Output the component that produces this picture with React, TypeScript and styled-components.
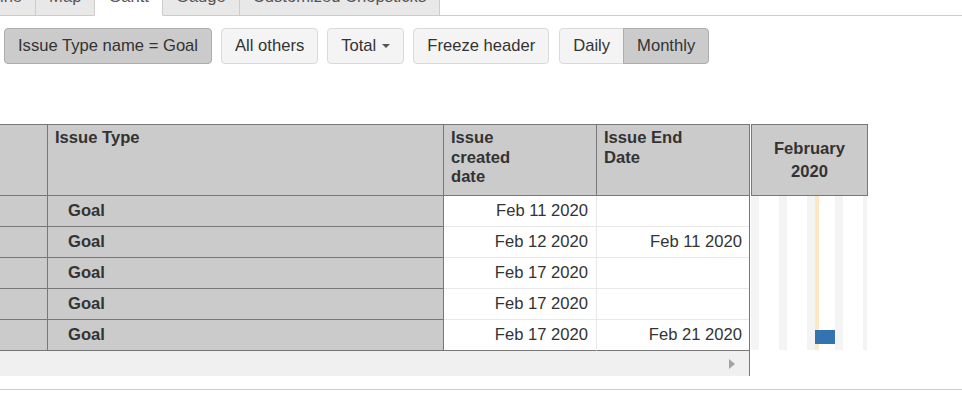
import styled, {createGlobalStyle} from 'styled-components';

type Row = {
  type: string;
  created: string;
  end: string;
  bar?: {start: number; end: number};
};

const rows: Row[] = [
  {type: 'Goal', created: 'Feb 11 2020', end: ''},
  {type: 'Goal', created: 'Feb 12 2020', end: 'Feb 11 2020'},
  {type: 'Goal', created: 'Feb 17 2020', end: ''},
  {type: 'Goal', created: 'Feb 17 2020', end: ''},
  {type: 'Goal', created: 'Feb 17 2020', end: 'Feb 21 2020', bar: {start: 17, end: 21}},
];

const tabs = ['Timeline', 'Map', 'Gantt', 'Gauge', 'Customized Chopsticks'];

const DAY = 4;
const DAYS = 29;
const ROW_H = 31;
const TODAY = 17;
const FONT = '16.6px';

const GlobalStyle = createGlobalStyle`
  body {
    margin: 0;
    font-family: "Liberation Sans", Arial, sans-serif;
    color: #333;
    background: #fff;
    overflow: hidden;
  }
`;

export default function App() {
  return (
    <>
      <GlobalStyle />
      <Page>
        <TabBar>
          {tabs.map(t => (
            <Tab key={t} $active={t === 'Gantt'}>{t}</Tab>
          ))}
        </TabBar>

        <Toolbar>
          <Button $active>Issue Type name = Goal</Button>
          <Button>All others</Button>
          <Button>Total<Caret /></Button>
          <Button>Freeze header</Button>
          <Group>
            <Button>Daily</Button>
            <Button $active>Monthly</Button>
          </Group>
        </Toolbar>

        <Report>
          <TableWrap>
            <Grid>
              <HeadCell />
              <HeadCell><HeadLabel $wide>Issue Type</HeadLabel></HeadCell>
              <HeadCell><HeadLabel>Issue created date</HeadLabel></HeadCell>
              <HeadCell $last><HeadLabel>Issue End Date</HeadLabel></HeadCell>
              {rows.map((r, i) => {
                const lastRow = i === rows.length - 1;
                return [
                  <RowCell key={`a${i}`} />,
                  <RowCell key={`b${i}`}><TypeName>{r.type}</TypeName></RowCell>,
                  <DateCell key={`c${i}`} $lastRow={lastRow}>{r.created}</DateCell>,
                  <DateCell key={`d${i}`} $lastRow={lastRow} $last>{r.end}</DateCell>,
                ];
              })}
            </Grid>
            <ScrollBar><Arrow /></ScrollBar>
          </TableWrap>

          <Gantt>
            <GanttHead>February<br />2020</GanttHead>
            <svg width={DAY * DAYS} height={ROW_H * rows.length - 1} style={{display: 'block'}}>
              {Array.from({length: DAYS}, (_, d) =>
                d % 7 < 2 ? <rect key={d} x={d * DAY} y={0} width={DAY} height={ROW_H * rows.length} fill="#f4f4f4" /> : null
              )}
              <rect x={(TODAY - 1) * DAY} y={0} width={DAY} height={ROW_H * rows.length} fill="#fde8c2" />
              {rows.map((r, i) =>
                r.bar ? (
                  <rect
                    key={i}
                    x={(r.bar.start - 1) * DAY}
                    y={i * ROW_H + 10}
                    width={(r.bar.end - r.bar.start + 1) * DAY}
                    height={14}
                    fill="#3572b0"
                  />
                ) : null
              )}
            </svg>
          </Gantt>
        </Report>

        <Footer />
      </Page>
    </>
  );
}

const Page = styled.div`
  width: 962px;
  height: 397px;
  overflow: hidden;
`;

const TabBar = styled.div`
  display: flex;
  margin: -22px 0 0 -54px;
  border-bottom: 1px solid #ccc;
`;

const Tab = styled.div<{$active?: boolean}>`
  padding: 8px 13px;
  line-height: 20px;
  font-size: ${FONT};
  color: #555;
  white-space: nowrap;
  border: 1px solid #ccc;
  border-bottom: ${p => (p.$active ? '1px solid #fff' : 'none')};
  margin-bottom: ${p => (p.$active ? '-1px' : '0')};
  background: ${p => (p.$active ? '#fff' : '#e8e8e8')};
  & + & {
    margin-left: -1px;
  }
`;

const Toolbar = styled.div`
  display: flex;
  gap: 9px;
  margin: 12px 0 0 4px;
`;

const Group = styled.div`
  display: flex;
  margin-left: 1px;
  & > button:first-child {
    border-radius: 4px 0 0 4px;
  }
  & > button:last-child {
    border-radius: 0 4px 4px 0;
    margin-left: -1px;
  }
`;

const Button = styled.button<{$active?: boolean}>`
  font-family: inherit;
  font-size: ${FONT};
  line-height: 22px;
  padding: 6px 13px;
  color: #333;
  background: ${p => (p.$active ? '#cbcbcb' : '#f4f4f4')};
  border: 1px solid ${p => (p.$active ? '#adadad' : '#dadada')};
  border-radius: 4px;
  display: flex;
  align-items: center;
  cursor: pointer;
`;

const Caret = styled.span`
  margin-left: 6px;
  border-top: 4px solid #555;
  border-left: 4px solid transparent;
  border-right: 4px solid transparent;
`;

const Report = styled.div`
  display: flex;
  align-items: flex-start;
  margin-top: 60px;
`;

const TableWrap = styled.div`
  width: 749px;
  border-top: 1px solid #777;
  border-right: 1px solid #777;
`;

const Grid = styled.div`
  display: grid;
  grid-template-columns: 48px 396px 153px 152px;
`;

const HeadCell = styled.div<{$last?: boolean}>`
  box-sizing: border-box;
  height: 71px;
  padding: 3px 7px;
  background: #cbcbcb;
  border-bottom: 1px solid #777;
  border-right: ${p => (p.$last ? 'none' : '1px solid #777')};
`;

const HeadLabel = styled.div<{$wide?: boolean}>`
  max-width: ${p => (p.$wide ? 'none' : '92px')};
  font-size: ${FONT};
  font-weight: bold;
  line-height: 19.5px;
  color: #333;
`;

const RowCell = styled.div`
  box-sizing: border-box;
  height: ${ROW_H}px;
  background: #cbcbcb;
  border-bottom: 1px solid #777;
  border-right: 1px solid #777;
`;

const TypeName = styled.div`
  padding-left: 20px;
  font-size: ${FONT};
  font-weight: bold;
  line-height: 30px;
`;

const DateCell = styled.div<{$last?: boolean; $lastRow?: boolean}>`
  box-sizing: border-box;
  height: ${ROW_H}px;
  padding-right: ${p => (p.$last ? '7px' : '8px')};
  text-align: right;
  font-size: ${FONT};
  line-height: 30px;
  background: #fff;
  border-bottom: 1px solid ${p => (p.$lastRow ? '#777' : '#e8e8e8')};
  border-right: ${p => (p.$last ? 'none' : '1px solid #e8e8e8')};
`;

const ScrollBar = styled.div`
  height: 25px;
  background: #f0f0f0;
  display: flex;
  align-items: center;
  justify-content: flex-end;
  padding-right: 14px;
`;

const Arrow = styled.span`
  border-left: 6px solid #a3a3a3;
  border-top: 5px solid transparent;
  border-bottom: 5px solid transparent;
`;

const Gantt = styled.div`
  margin-left: 1px;
  width: 117px;
`;

const GanttHead = styled.div`
  box-sizing: border-box;
  height: 72px;
  border: 1px solid #777;
  background: #cbcbcb;
  display: flex;
  align-items: center;
  justify-content: center;
  text-align: center;
  font-size: ${FONT};
  font-weight: bold;
  line-height: 23px;
`;

const Footer = styled.div`
  margin-top: 13px;
  border-top: 1px solid #ccc;
`;
